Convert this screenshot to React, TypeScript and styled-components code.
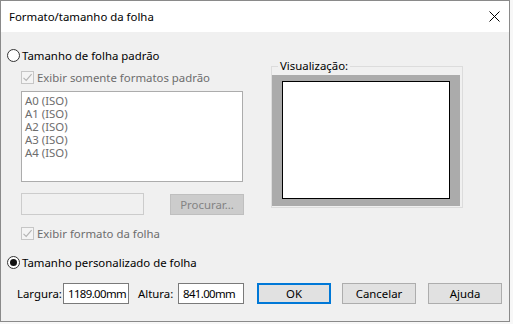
import { FC } from "react";
import styled, { createGlobalStyle } from "styled-components";

// Global
const GlobalStyle = createGlobalStyle`
  html, body {
    margin: 0;
    padding: 0;
    background: #f7f7f7;
  }
  body {
    font-family: "Noto Sans", "Open Sans", sans-serif;
    font-size: 11.4px;
    color: #000;
  }
`;

// Styled Components
const Dialog = styled.div`
  width: 510px;
  height: 322px;
  box-sizing: border-box;
  border: 1px solid #8a8a8a;
  background: #f0f0f0;
  display: flex;
  flex-direction: column;
`;

const TitleBar = styled.div`
  height: 31px;
  flex: none;
  background: #fff;
  display: flex;
  align-items: center;
  justify-content: space-between;
  padding: 0 9px 0 8px;
`;

const Title = styled.span`
  line-height: 1;
`;

const Body = styled.div`
  display: flex;
  flex-direction: column;
  padding: 16px 0 0 6px;
`;

const TopSection = styled.div`
  display: flex;
  align-items: flex-start;
`;

const LeftColumn = styled.div`
  width: 237px;
  display: flex;
  flex-direction: column;
`;

const OptionRow = styled.label<{ $indent?: number; $top?: number; $disabled?: boolean }>`
  display: flex;
  align-items: center;
  height: 14px;
  margin-left: ${(p) => p.$indent ?? 0}px;
  margin-top: ${(p) => p.$top ?? 0}px;
  color: ${(p) => (p.$disabled ? "#6d6d6d" : "#000")};
  white-space: nowrap;
`;

const RadioCircle = styled.span<{ $checked?: boolean }>`
  width: 13px;
  height: 13px;
  box-sizing: border-box;
  border: 1px solid #333;
  border-radius: 50%;
  background: #fff;
  display: flex;
  align-items: center;
  justify-content: center;
  margin-right: 2px;
  &::after {
    content: "";
    display: ${(p) => (p.$checked ? "block" : "none")};
    width: 7px;
    height: 7px;
    border-radius: 50%;
    background: #111;
  }
`;

const CheckBox = styled.span`
  width: 13px;
  height: 13px;
  box-sizing: border-box;
  border: 1px solid #c6c6c6;
  background: #f4f4f4;
  display: flex;
  align-items: center;
  justify-content: center;
  margin-right: 3px;
`;

const ListBox = styled.div`
  width: 222px;
  height: 91px;
  box-sizing: border-box;
  margin: 7px 0 0 14px;
  border: 1px solid #acacac;
  background: #fff;
  padding: 2px 0 0 3px;
  color: #6d6d6d;
`;

const ListItem = styled.div`
  height: 13px;
  line-height: 13px;
`;

const BrowseRow = styled.div`
  display: flex;
  align-items: flex-start;
  margin: 11px 0 0 14px;
  height: 22px;
`;

const PathField = styled.div`
  width: 123px;
  height: 22px;
  box-sizing: border-box;
  border: 1px solid #cccccc;
  background: #f0f0f0;
`;

const DisabledButton = styled.div`
  width: 74px;
  height: 21px;
  margin: 1px 0 0 26px;
  box-sizing: border-box;
  border: 1px solid #bfbfbf;
  background: #cccccc;
  color: #838383;
  display: flex;
  align-items: center;
  justify-content: center;
`;

const GroupBox = styled.fieldset`
  margin: 12px 0 0 27px;
  padding: 0 2px 1px 0;
  width: 192px;
  height: 148px;
  box-sizing: border-box;
  border: 1px solid #dcdcdc;
  display: flex;
`;

const GroupLegend = styled.legend`
  margin-left: 6px;
  padding: 0 2px;
  line-height: 12px;
  height: 12px;
`;

const PreviewArea = styled.div`
  flex: 1;
  margin-top: 3px;
  background: #ababab;
  display: flex;
  justify-content: center;
  padding: 6px 0 0 0;
`;

const Paper = styled.div`
  width: 168px;
  height: 118px;
  box-sizing: border-box;
  border: 1.5px solid #000;
  background: #fff;
`;

const FieldsRow = styled.div`
  display: flex;
  align-items: center;
  height: 21px;
  margin: 14px 0 0 10px;
`;

const FieldLabel = styled.span<{ $width: number; $left?: number }>`
  width: ${(p) => p.$width}px;
  margin-left: ${(p) => p.$left ?? 0}px;
  flex: none;
  white-space: nowrap;
`;

const NumberField = styled.div`
  width: 66px;
  height: 21px;
  box-sizing: border-box;
  border: 1px solid #7a7a7a;
  background: #fff;
  padding-left: 4px;
  display: flex;
  align-items: center;
  flex: none;
  letter-spacing: -0.6px;
  white-space: nowrap;
  overflow: hidden;
`;

const Button = styled.div<{ $default?: boolean; $left: number }>`
  width: 74px;
  height: 21px;
  margin-left: ${(p) => p.$left}px;
  box-sizing: border-box;
  border: ${(p) => (p.$default ? "2px solid #0078d7" : "1px solid #adadad")};
  background: #e1e1e1;
  display: flex;
  align-items: center;
  justify-content: center;
  flex: none;
`;

const CheckMark: FC = () => (
  <svg width="11" height="11" viewBox="0 0 11 11">
    <path d="M1.5 5.8 L4.2 8.4 L9.6 2.2" fill="none" stroke="#b3b3b3" strokeWidth="1.1" />
  </svg>
);

const CloseIcon: FC = () => (
  <svg width="11" height="11" viewBox="0 0 11 11">
    <path d="M0.5 0.5 L10.5 10.5 M10.5 0.5 L0.5 10.5" stroke="#000" strokeWidth="1" />
  </svg>
);

const sizes = ["A0 (ISO)", "A1 (ISO)", "A2 (ISO)", "A3 (ISO)", "A4 (ISO)"];

const App: FC = () => {
  return (
    <>
      <GlobalStyle />
      <Dialog>
        <TitleBar>
          <Title>Formato/tamanho da folha</Title>
          <CloseIcon />
        </TitleBar>
        <Body>
          <TopSection>
            <LeftColumn>
              <OptionRow>
                <RadioCircle />
                Tamanho de folha padrão
              </OptionRow>
              <OptionRow $indent={14} $top={8} $disabled>
                <CheckBox>
                  <CheckMark />
                </CheckBox>
                Exibir somente formatos padrão
              </OptionRow>
              <ListBox>
                {sizes.map((s) => (
                  <ListItem key={s}>{s}</ListItem>
                ))}
              </ListBox>
              <BrowseRow>
                <PathField />
                <DisabledButton>Procurar...</DisabledButton>
              </BrowseRow>
              <OptionRow $indent={14} $top={11} $disabled>
                <CheckBox>
                  <CheckMark />
                </CheckBox>
                Exibir formato da folha
              </OptionRow>
            </LeftColumn>
            <GroupBox>
              <GroupLegend>Visualização:</GroupLegend>
              <PreviewArea>
                <Paper />
              </PreviewArea>
            </GroupBox>
          </TopSection>
          <OptionRow $top={15}>
            <RadioCircle $checked />
            Tamanho personalizado de folha
          </OptionRow>
          <FieldsRow>
            <FieldLabel $width={46}>Largura:</FieldLabel>
            <NumberField>1189.00mm</NumberField>
            <FieldLabel $width={40} $left={9}>Altura:</FieldLabel>
            <NumberField>841.00mm</NumberField>
            <Button $default $left={13}>OK</Button>
            <Button $left={11}>Cancelar</Button>
            <Button $left={12}>Ajuda</Button>
          </FieldsRow>
        </Body>
      </Dialog>
    </>
  );
};

export default App;
